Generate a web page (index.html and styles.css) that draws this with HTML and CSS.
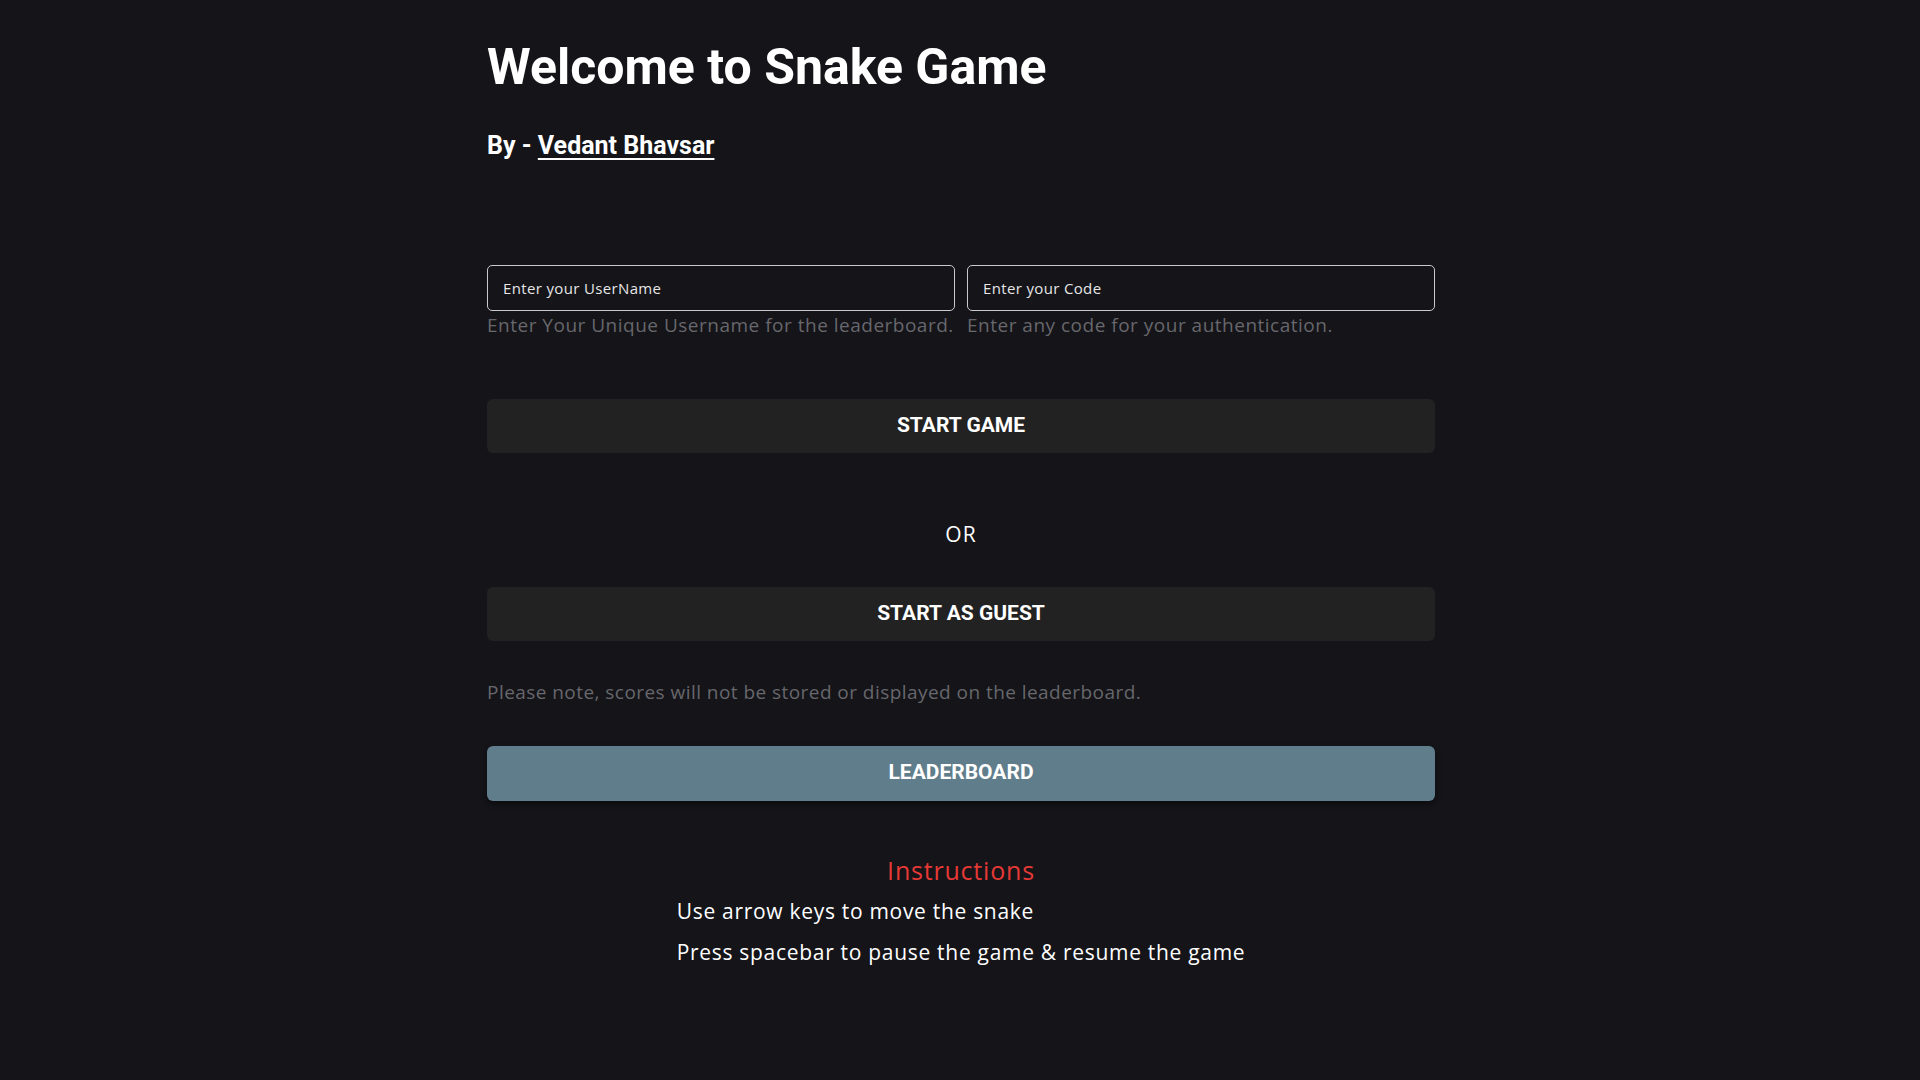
FILE: index.html
```html
<!DOCTYPE html>
<html lang="en">
<head>
<meta charset="utf-8">
<title>Snake Game</title>
<link rel="stylesheet" href="styles.css">
</head>
<body>
<main class="page">
  <h1 class="title">Welcome to Snake Game</h1>
  <h2 class="byline">By - <a class="author" href="#">Vedant Bhavsar</a></h2>

  <div class="fields">
    <div class="field">
      <input class="input" type="text" placeholder="Enter your UserName">
      <p class="hint">Enter Your Unique Username for the leaderboard.</p>
    </div>
    <div class="field">
      <input class="input" type="text" placeholder="Enter your Code">
      <p class="hint">Enter any code for your authentication.</p>
    </div>
  </div>

  <button class="btn btn-start" type="button">START GAME</button>
  <p class="or">OR</p>
  <button class="btn btn-guest" type="button">START AS GUEST</button>
  <p class="note">Please note, scores will not be stored or displayed on the leaderboard.</p>
  <button class="btn btn-board" type="button">LEADERBOARD</button>

  <section class="instructions">
    <h3 class="instructions-title">Instructions</h3>
    <ul class="instructions-list">
      <li>Use arrow keys to move the snake</li>
      <li>Press spacebar to pause the game &amp; resume the game</li>
    </ul>
  </section>
</main>
</body>
</html>
```
FILE: styles.css
```css
* { box-sizing: border-box; }

html, body {
  margin: 0;
  padding: 0;
  background: #141419;
  color: #ffffff;
}

body {
  font-family: "Open Sans", "Liberation Sans", sans-serif;
  min-height: 1080px;
}

.page {
  width: 948px;
  margin: 0 0 0 calc(50% - 473px);
  padding-top: 37px;
  display: flex;
  flex-direction: column;
}

.title {
  margin: 0;
  font-family: Roboto, "Liberation Sans", sans-serif;
  font-weight: 700;
  font-size: 50px;
  line-height: 60px;
  color: #ffffff;
}

.byline {
  margin: 35px 0 0;
  font-family: Roboto, "Liberation Sans", sans-serif;
  font-weight: 700;
  font-size: 25px;
  line-height: 28px;
  color: #ffffff;
}

.author {
  color: #ffffff;
  text-decoration: underline;
  text-decoration-thickness: 2px;
  text-underline-offset: 4px;
}

.fields {
  margin-top: 105px;
  display: grid;
  grid-template-columns: 1fr 1fr;
  column-gap: 12px;
}

.field {
  display: flex;
  flex-direction: column;
}

.input {
  height: 46px;
  width: 100%;
  padding: 0 15px;
  border: 1px solid #c9c9d0;
  border-radius: 5px;
  background: #141419;
  color: #ffffff;
  font-family: "Open Sans", "Liberation Sans", sans-serif;
  font-size: 15px;
  letter-spacing: 0.35px;
  outline: none;
}

.input::placeholder {
  color: #e6e6e6;
  opacity: 1;
}

.hint {
  margin: 2px 0 0;
  font-size: 19px;
  letter-spacing: 0.5px;
  line-height: 24px;
  color: #67676c;
  white-space: nowrap;
}

.btn {
  display: block;
  width: 100%;
  height: 54px;
  padding: 0 0 3px;
  border: none;
  border-radius: 6px;
  background: #222222;
  color: #ffffff;
  font-family: Roboto, "Liberation Sans", sans-serif;
  font-weight: 700;
  font-size: 21px;
  cursor: pointer;
}

.btn-start { margin-top: 62px; }

.or {
  margin: 69px 0 0;
  text-align: center;
  font-size: 21px;
  letter-spacing: 1px;
  line-height: 24px;
  color: #ffffff;
}

.btn-guest { margin-top: 41px; }

.note {
  margin: 39px 0 0;
  font-size: 19px;
  letter-spacing: 0.45px;
  line-height: 24px;
  color: #67676c;
}

.btn-board {
  margin-top: 42px;
  height: 55px;
  background: #607d8b;
  box-shadow: 0 3px 6px rgba(0, 0, 0, 0.45);
}

.instructions {
  margin-top: 54px;
  display: flex;
  flex-direction: column;
  align-items: center;
}

.instructions-title {
  margin: 0;
  font-weight: 400;
  font-size: 25px;
  letter-spacing: 0.8px;
  line-height: 30px;
  color: #e53935;
}

.instructions-list {
  margin: 6px 0 0;
  padding: 0;
  list-style: none;
  text-align: left;
}

.instructions-list li {
  font-size: 21px;
  letter-spacing: 0.7px;
  line-height: 41px;
  color: #ffffff;
}
```
